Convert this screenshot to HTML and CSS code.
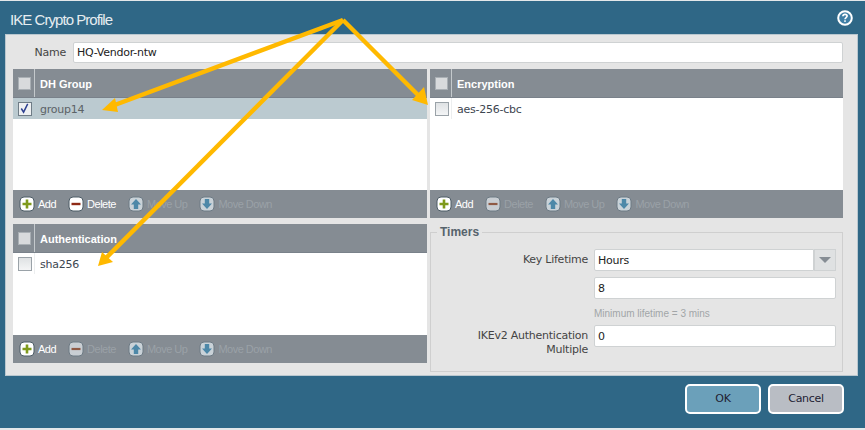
FILE: index.html
```html
<!DOCTYPE html>
<html lang="en">
<head>
<meta charset="utf-8">
<title>IKE Crypto Profile</title>
<link rel="stylesheet" href="styles.css">
</head>
<body>
<svg class="defs" width="0" height="0" aria-hidden="true">
  <symbol id="i-add" viewBox="0 0 16 16"><rect x="1" y="1" width="14" height="14" rx="4" fill="#fff" stroke="#4d5c66" stroke-width="1"/><path d="M8 3.5v9M3.5 8h9" stroke="#7f9a1c" stroke-width="2.6"/></symbol>
  <symbol id="i-del" viewBox="0 0 16 16"><rect x="1" y="1" width="14" height="14" rx="4" fill="#fff" stroke="#4d5c66" stroke-width="1"/><path d="M3.5 8h9" stroke="#8f2a16" stroke-width="2.4"/></symbol>
  <symbol id="i-del-off" viewBox="0 0 16 16"><rect x="1" y="1" width="14" height="14" rx="4" fill="#c9ced3" stroke="#6d7a84" stroke-width="1"/><path d="M3.5 8h9" stroke="#8f5a45" stroke-width="2.2"/></symbol>
  <symbol id="i-up" viewBox="0 0 16 16"><rect x="1" y="1" width="14" height="14" rx="4" fill="#c9d2d8" stroke="#6d7a84" stroke-width="1"/><path d="M8 3l5 5.5h-2.8V13H5.8V8.500H3z" fill="#4d88a8"/></symbol>
  <symbol id="i-down" viewBox="0 0 16 16"><rect x="1" y="1" width="14" height="14" rx="4" fill="#c9d2d8" stroke="#6d7a84" stroke-width="1"/><path d="M8 13L3 7.500h2.800V3h4.400v4.500H13z" fill="#4d88a8"/></symbol>
</svg>
<main class="dialog">
  <header class="titlebar">
    <h1 class="title">IKE Crypto Profile</h1>
    <svg class="help" viewBox="0 0 16 16" width="16" height="16" aria-hidden="true"><circle cx="8" cy="8" r="6.800" fill="#3f7fa6" stroke="#fff" stroke-width="2"/><path d="M5.900 6.300C6 4.900 6.900 4.300 8 4.300c1.200 0 2.100.7 2.100 1.800 0 1.500-2.100 1.500-2.100 3.200" fill="none" stroke="#fff" stroke-width="1.700"/><rect x="7.200" y="10.300" width="1.600" height="1.600" fill="#fff"/></svg>
  </header>
  <div class="content">
    <div class="name-row">
      <label class="name-label">Name</label>
      <div class="field name-field">HQ-Vendor-ntw</div>
    </div>
    <div class="panels">
      <section class="panel panel-tall">
        <div class="thead"><span class="cb-cell"><span class="cb"></span></span><span class="th">DH Group</span></div>
        <div class="tbody">
          <div class="row selected"><span class="cb-cell"><span class="cb checked"><svg viewBox="0 0 12 12" width="11" height="11"><path d="M2.500 6l2.500 4L9.500 1" fill="none" stroke="#2c3f8f" stroke-width="1.600"/></svg></span></span><span class="td muted">group14</span></div>
        </div>
        <div class="toolbar">
          <span class="tool"><svg class="ic"><use href="#i-add"/></svg>Add</span>
          <span class="tool"><svg class="ic"><use href="#i-del"/></svg>Delete</span>
          <span class="tool off"><svg class="ic"><use href="#i-up"/></svg>Move Up</span>
          <span class="tool off"><svg class="ic"><use href="#i-down"/></svg>Move Down</span>
        </div>
      </section>
      <section class="panel panel-tall">
        <div class="thead"><span class="cb-cell"><span class="cb"></span></span><span class="th">Encryption</span></div>
        <div class="tbody">
          <div class="row"><span class="cb-cell"><span class="cb"></span></span><span class="td">aes-256-cbc</span></div>
        </div>
        <div class="toolbar">
          <span class="tool"><svg class="ic"><use href="#i-add"/></svg>Add</span>
          <span class="tool off"><svg class="ic"><use href="#i-del-off"/></svg>Delete</span>
          <span class="tool off"><svg class="ic"><use href="#i-up"/></svg>Move Up</span>
          <span class="tool off"><svg class="ic"><use href="#i-down"/></svg>Move Down</span>
        </div>
      </section>
      <section class="panel panel-short">
        <div class="thead"><span class="cb-cell"><span class="cb"></span></span><span class="th">Authentication</span></div>
        <div class="tbody">
          <div class="row"><span class="cb-cell"><span class="cb"></span></span><span class="td">sha256</span></div>
        </div>
        <div class="toolbar">
          <span class="tool"><svg class="ic"><use href="#i-add"/></svg>Add</span>
          <span class="tool off"><svg class="ic"><use href="#i-del-off"/></svg>Delete</span>
          <span class="tool off"><svg class="ic"><use href="#i-up"/></svg>Move Up</span>
          <span class="tool off"><svg class="ic"><use href="#i-down"/></svg>Move Down</span>
        </div>
      </section>
      <fieldset class="timers">
        <legend class="legend">Timers</legend>
        <div class="form-row">
          <label class="form-label">Key Lifetime</label>
          <div class="combo"><div class="field combo-field">Hours</div><span class="combo-btn"><span class="caret"></span></span></div>
        </div>
        <div class="form-row">
          <span class="form-label"></span>
          <div class="field grow">8</div>
        </div>
        <div class="form-row hint-row">
          <span class="form-label"></span>
          <span class="hint">Minimum lifetime = 3 mins</span>
        </div>
        <div class="form-row">
          <label class="form-label">IKEv2 Authentication Multiple</label>
          <div class="field grow">0</div>
        </div>
      </fieldset>
    </div>
  </div>
  <footer class="footer">
    <button class="btn btn-ok">OK</button>
    <button class="btn btn-cancel">Cancel</button>
  </footer>
</main>
<svg class="arrows" width="865" height="430" viewBox="0 0 865 430" aria-hidden="true">
  <g fill="none" stroke="#ffb900" stroke-width="4.500">
    <path d="M343 20L112 106"/>
    <path d="M343 20L420 97"/>
    <path d="M343 20L106 258"/>
  </g>
  <g fill="#ffb900">
    <path d="M102 110L115 98L118 112Z"/>
    <path d="M428 105L412 100L424 87Z"/>
    <path d="M98 266L102 252L113 262Z"/>
  </g>
</svg>
</body>
</html>
```

FILE: styles.css
```css
* { box-sizing: border-box; }
html, body { margin: 0; height: 430px; overflow: hidden; }
body {
  background: #e4e8ea;
  font-family: "DejaVu Sans", sans-serif;
  font-size: 11px;
  letter-spacing: -0.25px;
  color: #333;
  padding: 1px 0 2px;
  position: relative;
}
.defs { position: absolute; }
.dialog {
  height: 427px;
  background: #2f6786;
  display: flex;
  flex-direction: column;
  padding: 0 8px 0 6px;
}
.titlebar {
  height: 34px;
  display: flex;
  align-items: center;
  justify-content: space-between;
  padding: 2px 4px 0 4px;
}
.title {
  margin: 0;
  font-family: "Liberation Sans", sans-serif;
  font-size: 15px;
  font-weight: 400;
  color: #e6edf1;
  letter-spacing: -0.95px;
}
.help { margin-top: -2px; }
.content {
  height: 340px;
  background: #e5e5e5;
  padding: 7px 14px 0 7px;
  box-shadow: 0 0 0 1px #b9c7cf;
}
.name-row { display: flex; align-items: center; height: 21px; gap: 7px; }
.name-label { width: 53px; text-align: right; color: #444; }
.field {
  background: #fff;
  border: 1px solid #cfd2d3;
  border-radius: 2px;
  height: 22px;
  display: flex;
  align-items: center;
  padding-left: 3px;
  color: #222;
}
.name-field { flex: 1; height: 21px; }
.panels {
  margin-top: 6px;
  display: grid;
  grid-template-columns: 414px 413px;
  grid-template-rows: 149px 148px;
  column-gap: 3px;
  row-gap: 6px;
}
.panel { display: flex; flex-direction: column; }
.panel-short { height: 139px; }
.thead {
  height: 29px;
  background: #858c93;
  display: flex;
  align-items: stretch;
  border-bottom: 1px solid #79818a;
}
.cb-cell {
  width: 22px;
  display: flex;
  align-items: center;
  justify-content: center;
  padding-left: 2px;
  border-right: 1px solid #c4c9cc;
}
.row .cb-cell { border-right-color: #eceeef; }
.row.selected .cb-cell { border-right-color: #bbcad0; }
.cb {
  width: 14px;
  height: 14px;
  background: linear-gradient(#dfe2e4, #f4f5f6);
  border: 1px solid #9aa2a8;
  display: flex;
  align-items: center;
  justify-content: center;
}
.cb.checked { border-color: #6f7c86; background: #eef0f2; }
.thead .cb { width: 13px; height: 13px; background: #d8dadc; border-color: #a9afb4; }
.th {
  color: #fff;
  font-family: "Liberation Sans", sans-serif;
  font-weight: 700;
  letter-spacing: 0;
  align-self: center;
  padding: 2px 0 0 5px;
}
.tbody { flex: 1; background: #fff; }
.row { height: 21px; display: flex; align-items: stretch; }
.row.selected { background: #bbcad0; }
.td { align-self: center; padding: 2px 0 0 5px; color: #3d4650; }
.td.muted { color: #5c6266; }
.toolbar {
  height: 28px;
  background: #858c93;
  display: flex;
  align-items: center;
  padding: 0 0 0 6px;
  gap: 12px;
}
.tool {
  display: inline-flex;
  align-items: center;
  gap: 3px;
  color: #fff;
  font-family: "Liberation Sans", sans-serif;
  letter-spacing: -0.5px;
}
.tool.off { color: #9aa1a7; }
.ic { width: 16px; height: 16px; }
.timers {
  margin: 2px 0 0;
  padding: 11px 6px 0 0;
  height: 146px;
  border: 1px solid #cfcfcf;
  min-width: 0;
}
.legend {
  padding: 0 3px;
  margin-left: 6px;
  font-family: "Liberation Sans", sans-serif;
  font-weight: 700;
  letter-spacing: 0;
  color: #56636c;
  font-size: 12px;
  line-height: 12px;
}
.form-row { display: flex; align-items: flex-start; gap: 6px; margin-bottom: 6px; }
.form-label { width: 157px; flex: none; text-align: right; color: #444; line-height: 14px; padding: 4px 0 0 30px; }
.grow { flex: 1; }
.combo { flex: 1; display: flex; }
.combo-field { flex: 1; border-radius: 2px 0 0 2px; }
.combo-btn { width: 22px; height: 22px; background: #dfe1e2; border: 1px solid #cfd2d3; display: flex; align-items: center; justify-content: center; }
.caret { width: 0; height: 0; border-left: 6px solid transparent; border-right: 6px solid transparent; border-top: 6px solid #868d94; }
.hint-row { margin: 9px 0 5px; height: 12px; }
.hint { font-family: "Liberation Sans", sans-serif; letter-spacing: 0; color: #a2a6a8; font-size: 10px; line-height: 12px; }
.footer {
  flex: 1;
  display: flex;
  justify-content: flex-end;
  align-items: center;
  gap: 7px;
  padding: 0 13px 6px 0;
}
.btn {
  height: 30px;
  border: 2px solid #fff;
  border-radius: 5px;
  font-family: "DejaVu Sans", sans-serif;
  font-size: 11px;
  letter-spacing: -0.3px;
  color: #223;
  padding: 0;
  width: 76px;
}
.btn-ok { background: #6ba0ba; }
.btn-cancel { background: #b9bdc4; }
.arrows { position: absolute; left: 0; top: 0; pointer-events: none; }
```
